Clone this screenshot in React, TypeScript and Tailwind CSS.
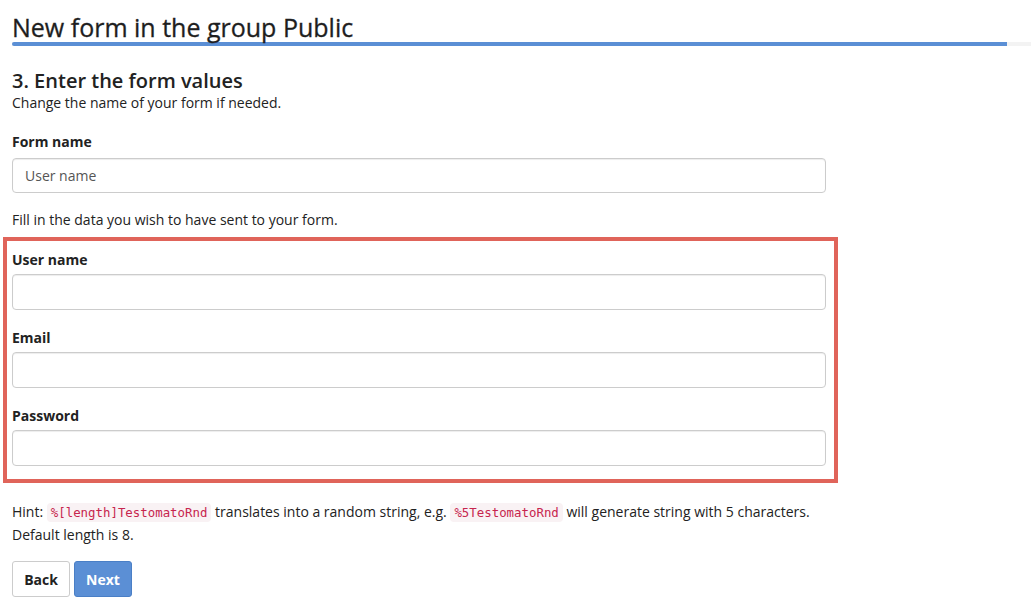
import React from "react";

const font = { fontFamily: '"Open Sans", "Noto Sans", sans-serif' };
const mono = { fontFamily: '"DejaVu Sans Mono", "Liberation Mono", monospace' };

function Field({ label }: { label: string }) {
  return (
    <div className="flex flex-col">
      <label className="text-[14px] leading-[20px] font-bold text-[#222] mb-[4px]">{label}</label>
      <div className="h-[36px] w-[814px] rounded-[4px] border border-[#cccccc] bg-white shadow-[inset_0_1px_1px_rgba(0,0,0,0.075)]" />
    </div>
  );
}

export default function App() {
  return (
    <div className="bg-white min-h-[611px] w-[1031px] text-[#222] overflow-hidden" style={font}>
      <div className="pl-[12px] pt-[13px]">
        <h1 className="text-[25px] leading-[28px] font-normal text-[#1e1e1e] [-webkit-text-stroke:0.3px_#1e1e1e]">New form in the group Public</h1>
        <div className="mt-[1px] h-[4px] w-full bg-[#f3f3f3]">
          <div className="h-full w-[995px] rounded-l-[2px] bg-[#5b8fd5]" />
        </div>

        <h2 className="mt-[22px] text-[20px] leading-[26px] font-semibold text-[#222]">3. Enter the form values</h2>
        <p className="text-[14px] leading-[18px] text-[#222]">Change the name of your form if needed.</p>

        <div className="mt-[20px] flex flex-col">
          <label className="text-[14px] leading-[20px] font-bold text-[#222] mb-[6px]">Form name</label>
          <div className="h-[35px] w-[814px] rounded-[4px] border border-[#cccccc] bg-white flex items-center px-[12px] text-[14px] text-[#555] shadow-[inset_0_1px_1px_rgba(0,0,0,0.075)]">
            User name
          </div>
        </div>

        <p className="mt-[17px] text-[14px] leading-[20px] text-[#222]">Fill in the data you wish to have sent to your form.</p>

        <div className="mt-[7px] -ml-[9px] w-[835px] border-[4px] border-[#e0645a] pl-[5px] pr-[8px] pt-[9px] pb-[13px] flex flex-col gap-[18px]">
          <Field label="User name" />
          <Field label="Email" />
          <Field label="Password" />
        </div>

        <div className="mt-[18px] text-[14px] leading-[22px] text-[#222]">
          <p>
            Hint:{" "}
            <code className="rounded-[4px] bg-[#f9f2f4] px-[4px] py-[2px] text-[12.4px] text-[#c7254e]" style={mono}>
              %[length]TestomatoRnd
            </code>{" "}
            translates into a random string, e.g.{" "}
            <code className="rounded-[4px] bg-[#f9f2f4] px-[4px] py-[2px] text-[12.4px] text-[#c7254e]" style={mono}>
              %5TestomatoRnd
            </code>{" "}
            will generate string with 5 characters.
          </p>
          <p>Default length is 8.</p>
        </div>

        <div className="mt-[15px] flex gap-[4px]">
          <button className="h-[36px] w-[58px] rounded-[3px] border border-[#cccccc] bg-white text-[14px] font-bold text-[#222]">Back</button>
          <button className="h-[36px] w-[58px] rounded-[3px] border border-[#4a7fc6] bg-[#5b8fd5] text-[14px] font-bold text-white">Next</button>
        </div>
      </div>
    </div>
  );
}
